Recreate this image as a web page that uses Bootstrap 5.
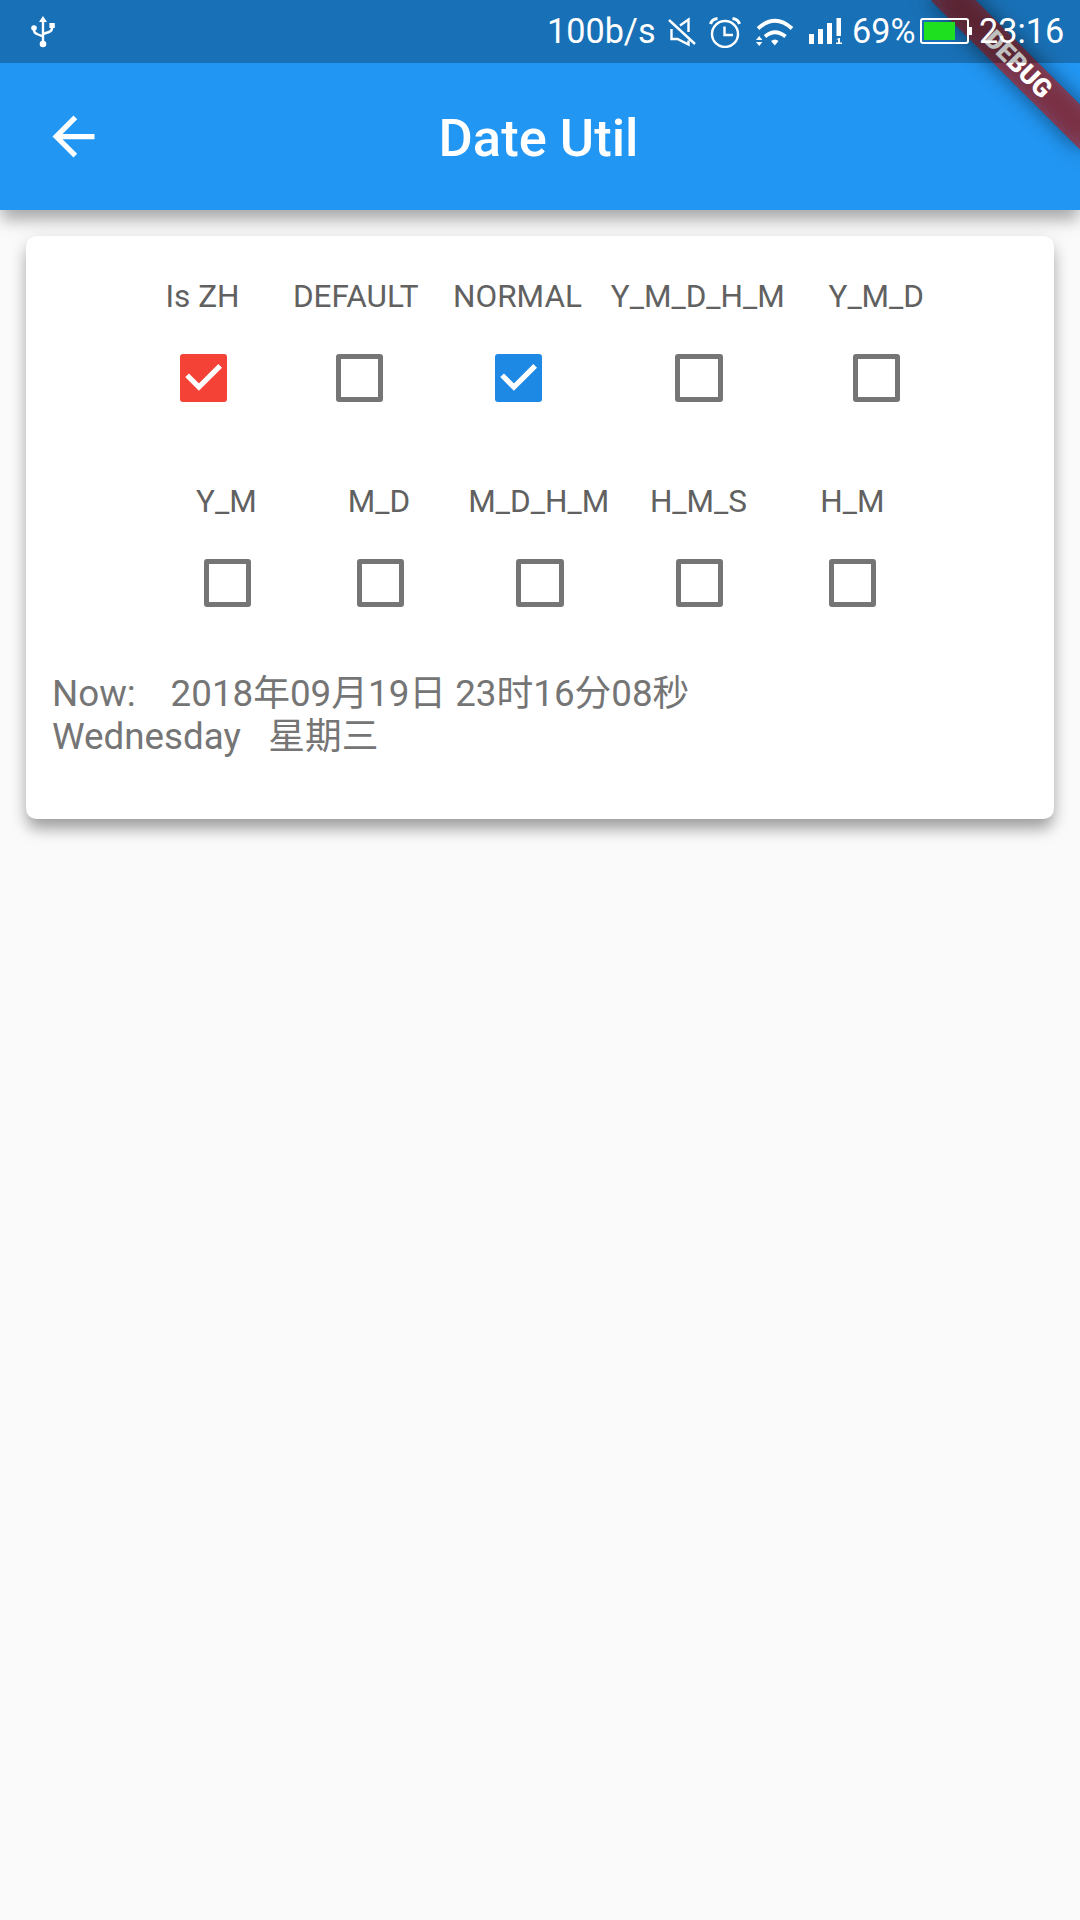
<!DOCTYPE html>
<html lang="en">
<head>
<meta charset="utf-8">
<meta name="viewport" content="width=device-width, initial-scale=1">
<title>Date Util</title>
<link href="https://cdn.jsdelivr.net/npm/bootstrap@5.3.0/dist/css/bootstrap.min.css" rel="stylesheet">
<style>
body{font-family:Roboto,"Noto Sans CJK SC",sans-serif;background:#fafafa;color:#757575}
.screen{width:1080px;height:1920px;background:#fafafa}
.topbar{height:210px;background:#2196f3;padding:63px 0 0;box-shadow:0 12px 15px -2px rgba(0,0,0,.27),0 4px 20px rgba(0,0,0,.1)}
.bar-row{height:147px}
.side{width:147px;padding-left:42px}
.title-text{font-size:52.5px;font-weight:500;line-height:1;padding:3px 3px 0 0}
.sysbar{height:63px;background:rgba(0,0,0,.25);z-index:5;font-size:34.2px;line-height:63px;white-space:nowrap}
.sysbar svg{display:block;flex:none}
.sysbar span{flex:none}
.i-usb{margin-left:30px}.i-alarm{margin-left:13px}.i-wifi{margin-left:15px}.i-sig{margin-left:15px}
.t-rate{margin-left:491px;width:121px}.t-pct{margin-left:10px;width:68px}.t-clock{margin-left:7px}
.ribbon-clip{width:240px;height:210px;z-index:2}
.ribbon,.ribbon-shade{position:absolute;width:210px;height:31.5px;left:calc(100% - 105px);top:73.5px;transform-origin:105px -73.5px;transform:rotate(45deg)}
.ribbon{background:rgba(183,28,28,.627);font-size:26px;font-weight:900;line-height:31.5px;padding-left:3px}
.ribbon-shade{background:rgba(0,0,0,.5);filter:blur(10.4px)}
.panel{margin:26px 26px 0;height:583px;border-radius:10.5px;padding:42px 26px 0;box-shadow:0 12px 15px -2px rgba(0,0,0,.3),0 4px 18px rgba(0,0,0,.13)}
.opts{gap:26.5px;font-size:31.5px;line-height:37px;color:#616161;height:163px;margin-bottom:42px}
.opts + .opts{gap:26.7px;margin-bottom:27px}
.opt{width:126px;white-space:nowrap}
.opt > span{padding-right:2.5px}
.opt:last-child > span{padding-right:0}
.w-def{width:133px}.w-nor{width:132px}.w-long{width:175.5px}.w-mid{width:140px}
.w-def > span{padding-right:8px}
.tick-cell{height:126px;width:126px}
.tick{width:47.25px;height:47.25px;border:5.25px solid #757575;border-radius:3px}
.tick.on{border:0;background:#1e88e5}
.tick.red{background:#f44336}
.tick svg{display:block}
.now{font-size:36.75px;line-height:42.5px;white-space:pre}
.now .gap-fix{letter-spacing:-.4px}
</style>
<script src="https://cdn.jsdelivr.net/npm/bootstrap@5.3.0/dist/js/bootstrap.bundle.min.js"></script>
</head>
<body>
<div class="screen position-relative overflow-hidden">
  <div class="sysbar position-absolute top-0 start-0 w-100 d-flex align-items-center text-white">
    <svg class="i-usb" width="26" height="34" viewBox="0 0 26 34" fill="none" stroke="#fff" stroke-width="2.4"><path d="M13 4v26M4 12v3q0 3 3 4l6 2.500M22 10v3q0 3-3 4l-6 2"/><g fill="#fff" stroke="none"><path d="M13 1l4 6H9z"/><circle cx="4" cy="13" r="2.800"/><rect x="19.400" y="8" width="5.400" height="5"/><circle cx="13" cy="29" r="3.300"/></g></svg>
    <span class="t-rate">100b/s</span>
    <svg width="28" height="30" viewBox="0 0 28 30" fill="none" stroke="#fff" stroke-width="2.400"><path d="M1 3l26 24M3.500 12v10h6l11 5.500v-4M12 8.500l8.500-6V15"/></svg>
    <svg class="i-alarm" width="32" height="32" viewBox="0 0 32 32" fill="none" stroke="#fff" stroke-width="2.400"><circle cx="16" cy="18" r="13"/><path d="M15.500 10.500v8.500H24"/><path stroke-width="3.200" d="M1.500 8q1.500-5 7-5.500M30.500 8q-1.500-5-7-5.500"/></svg>
    <svg class="i-wifi" width="38" height="30" viewBox="0 0 38 30" fill="none" stroke="#fff" stroke-width="3.800"><path d="M2 11.500Q19-4 36 11.500M9 19.500q10-8.500 20.500 0"/><g fill="#fff" stroke="none"><path d="M15 24q4-3 7.500 0l-3.700 4.500z"/><path d="M0 23l3.200-4L6.400 23zM0 25h6.400L3.200 29z"/></g></svg>
    <svg class="i-sig" width="33" height="27" viewBox="0 0 33 27" fill="#fff"><path d="M0 16h5v10H0zM9 11h5v15H9zM18 5h5v21h-5zM27.500 0h4.500v18h-4.500zM27 21.500l3-1.500h1v4.500h2V26h-6v-1.500h2v-3z"/></svg>
    <span class="t-pct">69%</span>
    <svg width="52" height="27" viewBox="0 0 52 27"><rect x="1" y="1" width="47" height="24" rx="2" fill="none" stroke="#fff" stroke-width="2"/><path fill="#fff" d="M49 9h3v8h-3z"/><rect x="4" y="4" width="31" height="18" fill="#1ee01e"/></svg>
    <span class="t-clock">23:16</span>
  </div>
  <header class="topbar position-relative text-white">
    <div class="bar-row d-flex align-items-center">
      <div class="side"><svg class="d-block" width="63" height="63" viewBox="0 0 24 24" fill="#fff"><path d="M20 11H7.830l5.590-5.590L12 4l-8 8 8 8 1.410-1.410L7.830 13H20v-2z"/></svg></div>
      <div class="title-text flex-grow-1 text-center">Date Util</div>
      <div class="side"></div>
    </div>
    <div class="ribbon-clip position-absolute top-0 end-0 overflow-hidden">
      <div class="ribbon-shade"></div>
      <div class="ribbon text-center text-white">DEBUG</div>
    </div>
  </header>
  <main class="panel bg-white">
    <div class="opts d-flex justify-content-center">
      <div class="opt d-flex flex-column align-items-center"><span>Is ZH</span><div class="tick-cell d-flex align-items-center justify-content-center"><div class="tick on red"><svg width="47.250" height="47.250" viewBox="0 0 18 18" fill="none" stroke="#fff" stroke-width="2"><path d="M2.700 8.100l4.500 4.500 8.100-8.100"/></svg></div></div></div>
      <div class="opt w-def d-flex flex-column align-items-center"><span>DEFAULT</span><div class="tick-cell d-flex align-items-center justify-content-center"><div class="tick"></div></div></div>
      <div class="opt w-nor d-flex flex-column align-items-center"><span>NORMAL</span><div class="tick-cell d-flex align-items-center justify-content-center"><div class="tick on"><svg width="47.250" height="47.250" viewBox="0 0 18 18" fill="none" stroke="#fff" stroke-width="2"><path d="M2.700 8.100l4.500 4.500 8.100-8.100"/></svg></div></div></div>
      <div class="opt w-long d-flex flex-column align-items-center"><span>Y_M_D_H_M</span><div class="tick-cell d-flex align-items-center justify-content-center"><div class="tick"></div></div></div>
      <div class="opt d-flex flex-column align-items-center"><span>Y_M_D</span><div class="tick-cell d-flex align-items-center justify-content-center"><div class="tick"></div></div></div>
    </div>
    <div class="opts d-flex justify-content-center">
      <div class="opt d-flex flex-column align-items-center"><span>Y_M</span><div class="tick-cell d-flex align-items-center justify-content-center"><div class="tick"></div></div></div>
      <div class="opt d-flex flex-column align-items-center"><span>M_D</span><div class="tick-cell d-flex align-items-center justify-content-center"><div class="tick"></div></div></div>
      <div class="opt w-mid d-flex flex-column align-items-center"><span>M_D_H_M</span><div class="tick-cell d-flex align-items-center justify-content-center"><div class="tick"></div></div></div>
      <div class="opt d-flex flex-column align-items-center"><span>H_M_S</span><div class="tick-cell d-flex align-items-center justify-content-center"><div class="tick"></div></div></div>
      <div class="opt d-flex flex-column align-items-center"><span>H_M</span><div class="tick-cell d-flex align-items-center justify-content-center"><div class="tick"></div></div></div>
    </div>
    <div class="now" lang="zh-CN"><div>Now:<span class="gap-fix">    </span>2018年09月19日 23时16分08秒</div><div>Wednesday   星期三</div></div>
  </main>
</div>
</body>
</html>
